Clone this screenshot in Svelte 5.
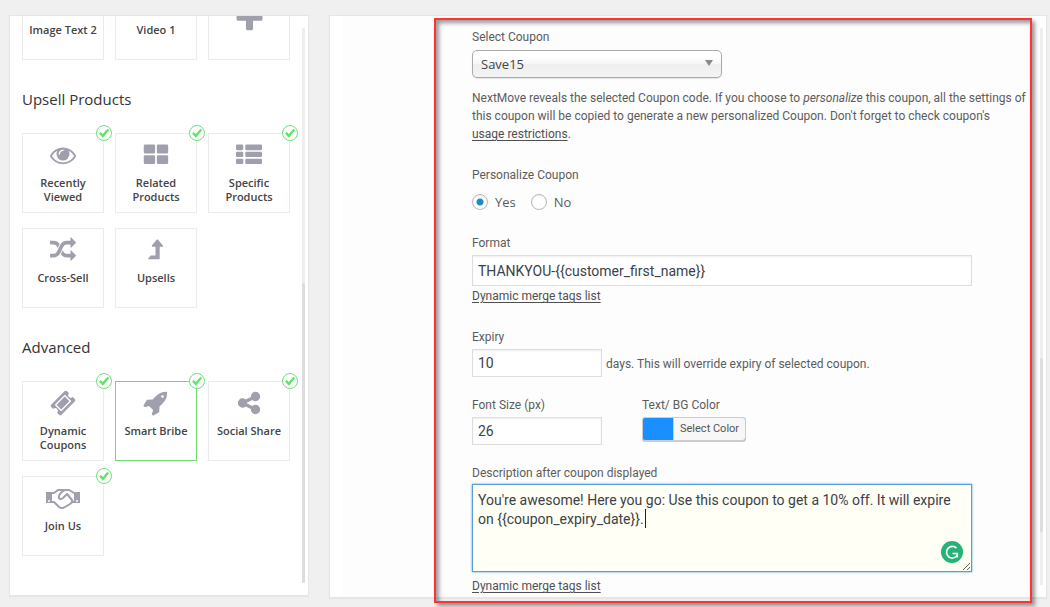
<script>
  const plus = 'M1600 736v192q0 40-28 68t-68 28h-416v416q0 40-28 68t-68 28h-192q-40 0-68-28t-28-68v-416h-416q-40 0-68-28t-28-68v-192q0-40 28-68t68-28h416v-416q0-40 28-68t68-28h192q40 0 68 28t28 68v416h416q40 0 68 28t28 68z';
  const eye = 'M1664 960q-152-236-381-353 61 104 61 225 0 185-131.5 316.5t-316.5 131.5-316.5-131.5-131.5-316.5q0-121 61-225-229 117-381 353 133 205 333.5 326.5t434.5 121.5 434.5-121.5 333.5-326.5zm-720-384q0-20-14-34t-34-14q-125 0-214.5 89.5t-89.5 214.5q0 20 14 34t34 14 34-14 14-34q0-86 61-147t147-61q20 0 34-14t14-34zm848 384q0 34-20 69-140 230-376.5 368.5t-499.5 138.5-499.5-139-376.5-368q-20-35-20-69t20-69q140-229 376.5-368t499.5-139 499.5 139 376.5 368q20 35 20 69z';
  const grid = 'M144 170h600q90 0 90 90v450q0 90-90 90h-600q-90 0-90-90v-450q0-90 90-90zm900 0h600q90 0 90 90v450q0 90-90 90h-600q-90 0-90-90v-450q0-90 90-90zm-900 740h600q90 0 90 90v430q0 90-90 90h-600q-90 0-90-90v-430q0-90 90-90zm900 0h600q90 0 90 90v430q0 90-90 90h-600q-90 0-90-90v-430q0-90 90-90z';
  const list = 'M80 170h340q80 0 80 80v240q0 80-80 80h-340q-80 0-80-80v-240q0-80 80-80zm640 0h992q80 0 80 80v240q0 80-80 80h-992q-80 0-80-80v-240q0-80 80-80zm-640 500h340q80 0 80 80v210q0 80-80 80h-340q-80 0-80-80v-210q0-80 80-80zm640 0h992q80 0 80 80v210q0 80-80 80h-992q-80 0-80-80v-210q0-80 80-80zm-640 480h340q80 0 80 80v210q0 80-80 80h-340q-80 0-80-80v-210q0-80 80-80zm640 0h992q80 0 80 80v210q0 80-80 80h-992q-80 0-80-80v-210q0-80 80-80z';
  const random = 'M666 481q-60 92-137 273-22-45-37-72.5t-40.5-63.5-51-56.5-63-35-81.5-14.5h-224q-14 0-23-9t-9-23v-192q0-14 9-23t23-9h224q250 0 410 225zm1126 799q0 14-9 23l-320 320q-9 9-23 9-13 0-22.5-9.5t-9.5-22.5v-192q-32 0-85 .5t-81 1-73-1-71-5-64-10.5-63-18.5-58-28.5-59-40-55-53.5-56-69.5q59-93 136-273 22 45 37 72.5t40.5 63.5 51 56.5 63 35 81.5 14.5h256v-192q0-14 9-23t23-9q12 0 24 10l319 319q9 9 9 23zm0-896q0 14-9 23l-320 320q-9 9-23 9-13 0-22.5-9.5t-9.5-22.5v-192h-256q-48 0-87 15t-69 45-51 61.5-45 77.5q-32 62-78 171-29 66-49.5 111t-54 105-64 100-74 83-90 68.5-106.5 42-128 16.5h-224q-14 0-23-9t-9-23v-192q0-14 9-23t23-9h224q48 0 87-15t69-45 51-61.5 45-77.5q32-62 78-171 29-66 49.5-111t54-105 64-100 74-83 90-68.5 106.5-42 128-16.5h256v-192q0-14 9-23t23-9q12 0 24 10l319 319q9 9 9 23z';
  const levelUp = 'M1400 630q-18 42-58 42h-192v832q0 32-32 32h-736q-20 0-29-18t4-35l160-192q10-11 25-11h320v-608h-192q-40 0-58-37t10-69l320-384q18-22 49-22t49 22l320 384q28 32 10 64z';
  const ticket = 'M1024 452l316 316-572 572-316-316zm-211 979l618-618q19-19 19-45t-19-45l-362-362q-18-18-45-18t-45 18l-618 618q-19 19-19 45t19 45l362 362q18 18 45 18t45-18zm889-637l-907 908q-37 37-90.5 37t-90.5-37l-126-126q56-56 56-136t-56-136-136-56-136 56l-125-126q-37-37-37-90.5t37-90.5l907-906q37-37 90.5-37t90.5 37l125 125q-56 56-56 136t56 136 136 56 136-56l126 125q37 37 37 90.5t-37 90.5z';
  const rocket = 'M1440 448q0-40-28-68t-68-28-68 28-28 68 28 68 68 28 68-28 28-68zm224-288q0 249-75.5 430.5t-253.5 360.5q-81 80-195 176l-20 379q-2 16-16 26l-384 224q-7 4-16 4-12 0-23-9l-64-64q-13-14-8-32l85-276-281-281-276 85q-3 1-9 1-14 0-23-9l-64-64q-17-19-5-39l224-384q10-14 26-16l379-20q96-114 176-195 188-187 358-258t431-71q14 0 24 9.5t10 22.5z';
  const share = 'M1344 1024q133 0 226.5 93.5t93.5 226.5-93.5 226.5-226.5 93.5-226.5-93.5-93.5-226.5q0-12 2-34l-360-180q-92 86-218 86-133 0-226.5-93.5t-93.5-226.5 93.5-226.5 226.5-93.5q126 0 218 86l360-180q-2-22-2-34 0-133 93.5-226.5t226.5-93.5 226.5 93.5 93.5 226.5-93.5 226.5-226.5 93.5q-126 0-218-86l-360 180q2 22 2 34t-2 34l360 180q92-86 218-86z';

  const groups = [
    {
      title: '',
      items: [
        { label: 'Image Text 2', icon: grid },
        { label: 'Video 1', icon: eye },
        { label: '', icon: plus, add: true }
      ]
    },
    {
      title: 'Upsell Products',
      items: [
        { label: 'Recently Viewed', icon: eye, checked: true },
        { label: 'Related Products', icon: grid, checked: true },
        { label: 'Specific Products', icon: list, checked: true },
        { label: 'Cross-Sell', icon: random },
        { label: 'Upsells', icon: levelUp }
      ]
    },
    {
      title: 'Advanced',
      items: [
        { label: 'Dynamic Coupons', icon: ticket, checked: true },
        { label: 'Smart Bribe', icon: rocket, checked: true },
        { label: 'Social Share', icon: share, checked: true },
        { label: 'Join Us', icon: 'handshake', checked: true }
      ]
    }
  ];

  let selected = $state('Smart Bribe');
  let coupon = $state('Save15');
  let personalize = $state('yes');
  let format = $state('THANKYOU-{{customer_first_name}}');
  let expiry = $state('10');
  let fontSize = $state('26');
  let description = $state("You're awesome! Here you go: Use this coupon to get a 10% off. It will expire on {{coupon_expiry_date}}. ");
</script>

<main>
  <aside class="panel components">
    <div class="groups">
      {#each groups as group}
        <section>
          {#if group.title}
            <h2>{group.title}</h2>
          {/if}
          <div class="cards">
            {#each group.items as item}
              <button
                class="card"
                class:active={item.label === selected}
                class:add={item.add}
                aria-label={item.label || 'Add component'}
                onclick={() => (selected = item.label)}
              >
                {#if item.icon === 'handshake'}
                  <svg class="icon wide" viewBox="0 0 34 26">
                    <path d="M0 7h6v11h-6zM28 7h6v11h-6z" fill="currentColor" />
                    <circle cx="3" cy="16" r="1" fill="#fff" />
                    <circle cx="31" cy="16" r="1" fill="#fff" />
                    <path
                      d="M6 8h2l4-3h4l2 1M6 17h2l5 5q3 2 6 0l5-3q3-2 2-4l-5-6-4 4q-3 2-4 0-1-3 4-7 1-1 3-1h3l5 3h2M25 17h3"
                      fill="none"
                      stroke="currentColor"
                      stroke-width="2"
                      stroke-linejoin="round"
                    />
                  </svg>
                {:else}
                  <svg class="icon" viewBox="0 0 1792 1792"><path d={item.icon} fill="currentColor" /></svg>
                {/if}
                {#if item.label}
                  <span>{item.label}</span>
                {/if}
                {#if item.checked}
                  <svg class="tick" viewBox="0 0 16 16">
                    <circle cx="8" cy="8" r="7.5" fill="#fff" stroke="#6fe07a" />
                    <path d="M3 8.600l1.800-1.600 2 2 4.700-5.200 1.600 1.400-6.200 7.600z" fill="#5fe36c" />
                  </svg>
                {/if}
              </button>
            {/each}
          </div>
        </section>
      {/each}
    </div>
    <div class="track"><div class="thumb"></div></div>
  </aside>

  <div class="panel settings">
    <form>
      <div class="field">
        <label for="coupon">Select Coupon</label>
        <div class="select">
          <select id="coupon" bind:value={coupon}>
            <option>Save15</option>
          </select>
        </div>
        <p>
          NextMove reveals the selected Coupon code. If you choose to <em>personalize</em> this coupon, all the settings of
          this coupon will be copied to generate a new personalized Coupon. Don't forget to check coupon's
          <a href="#restrictions">usage restrictions</a>.
        </p>
      </div>

      <fieldset class="field">
        <legend>Personalize Coupon</legend>
        <div class="radios">
          <label><input type="radio" value="yes" bind:group={personalize} />Yes</label>
          <label><input type="radio" value="no" bind:group={personalize} />No</label>
        </div>
      </fieldset>

      <div class="field">
        <label for="format">Format</label>
        <input id="format" class="wide-input" type="text" bind:value={format} />
        <a href="#tags">Dynamic merge tags list</a>
      </div>

      <div class="field tight">
        <label for="expiry">Expiry</label>
        <div class="inline">
          <input id="expiry" type="text" bind:value={expiry} />
          <span>days. This will override expiry of selected coupon.</span>
        </div>
      </div>

      <div class="field tight columns">
        <div>
          <label for="size">Font Size (px)</label>
          <input id="size" type="text" bind:value={fontSize} />
        </div>
        <div>
          <label for="color">Text/ BG Color</label>
          <button id="color" class="color" type="button"><span>Select Color</span></button>
        </div>
      </div>

      <div class="field">
        <label for="description">Description after coupon displayed</label>
        <div class="editor">
          <textarea id="description" bind:value={description}></textarea>
          <div class="caret"></div>
          <svg class="grammar" viewBox="0 0 22 22">
            <circle cx="11" cy="11" r="11" fill="#26b277" />
            <path d="M15.500 7.200a5.800 5.800 0 1 0 .6 7.400M11.500 12.500h4.800v4" fill="none" stroke="#fff" stroke-width="1.700" />
          </svg>
        </div>
        <a href="#tags">Dynamic merge tags list</a>
      </div>
    </form>
    <div class="track"><div class="thumb"></div></div>
    <div class="highlight"></div>
  </div>
</main>

<style>
  :global(body) {
    background: #f0f0f0;
  }
  main {
    display: grid;
    grid-template-columns: 300px 1fr;
    gap: 20px;
    height: 100vh;
    padding: 15px 3px 9px 9px;
    box-sizing: border-box;
    overflow: hidden;
    color: #444;
    font: 12px/18px Roboto, 'Open Sans', sans-serif;
  }
  .panel {
    display: flex;
    justify-content: space-between;
    position: relative;
    min-height: 0;
    box-sizing: border-box;
    background: #fff;
    border: 1px solid #e5e5e5;
    box-shadow: 0 1px 1px rgba(0, 0, 0, 0.04);
  }
  .components {
    margin-bottom: 2px;
    padding: 0 3px 12px 12px;
    overflow: hidden;
    font-family: 'Open Sans', 'Noto Sans', sans-serif;
  }
  .groups {
    display: flex;
    flex-direction: column;
    justify-content: flex-end;
    gap: 30px;
    padding-bottom: 27px;
  }
  h2 {
    margin: 0 0 24px;
    font-size: 15px;
    font-weight: 400;
    line-height: 19px;
    color: #333;
  }
  .cards {
    display: grid;
    grid-template-columns: repeat(3, 82px);
    gap: 15px 11px;
  }
  .card {
    display: flex;
    flex-direction: column;
    align-items: center;
    position: relative;
    height: 80px;
    padding: 8px 5px 0;
    box-sizing: border-box;
    background: #fff;
    border: 1px solid #ebebeb;
    color: #444;
    font: 600 11px/14px 'Open Sans', 'Noto Sans', sans-serif;
  }
  .card.active {
    border-color: #6fdc6f;
  }
  .card.add {
    justify-content: center;
    padding: 0 0 4px;
  }
  .icon {
    flex: none;
    width: 26px;
    height: 26px;
    margin-bottom: 8px;
    color: #a09fad;
  }
  .icon.wide {
    width: 34px;
  }
  .add .icon {
    width: 33px;
    height: 33px;
    margin: 0;
  }
  .tick {
    position: absolute;
    top: -9px;
    right: -9px;
    width: 16px;
    height: 16px;
  }
  .track {
    flex: none;
    display: flex;
    flex-direction: column;
    justify-content: flex-end;
    width: 3px;
    margin-top: 12px;
    background: #eee;
  }
  .thumb {
    height: 54%;
    background: #ddd;
    border-radius: 2px;
  }
  .settings {
    padding: 0 3px 12px 12px;
  }
  .settings .track {
    box-sizing: border-box;
    padding-bottom: 53px;
  }
  .settings .thumb {
    height: 174px;
  }
  form {
    flex: 1;
    margin: 0 10px -12px 0;
    padding: 12px 0 0 130px;
    background: #fdfdfd;
  }
  .field {
    margin: 0 0 23px;
    padding: 0;
    border: 0;
  }
  .field.tight {
    margin-bottom: 19px;
  }
  .field label,
  legend {
    display: block;
    padding: 0;
    color: #5c5c5c;
  }
  .select {
    position: relative;
    width: 250px;
    margin: 4px 0 11px;
  }
  .select::after {
    content: '';
    position: absolute;
    top: 10px;
    right: 9px;
    border: 4px solid transparent;
    border-top: 6px solid #888;
    border-bottom: 0;
  }
  select {
    display: block;
    appearance: none;
    width: 100%;
    height: 28px;
    padding: 0 8px;
    border: 1px solid #aaa;
    border-radius: 5px;
    background: linear-gradient(#fff 20%, #f6f6f6 50%, #eee 52%, #f4f4f4);
    box-shadow: 0 1px 1px rgba(0, 0, 0, 0.1);
    color: #444;
    font: 13px/26px 'Open Sans', 'Noto Sans', sans-serif;
  }
  p {
    margin: 0;
    color: #5c5c5c;
  }
  a {
    color: #505050;
    text-underline-offset: 2px;
    white-space: nowrap;
  }
  .radios {
    display: flex;
    gap: 15px;
    margin-top: 9px;
  }
  .radios label {
    display: flex;
    align-items: center;
    gap: 7px;
    font-family: 'Open Sans', 'Noto Sans', sans-serif;
    font-size: 13px;
  }
  input[type='radio'] {
    appearance: none;
    width: 16px;
    height: 16px;
    margin: 0;
    border: 1px solid #b4b9be;
    border-radius: 50%;
    background: #fff;
    box-shadow: inset 0 1px 2px rgba(0, 0, 0, 0.07);
  }
  input[type='radio']:checked {
    background: radial-gradient(circle, #1e8cbe 3px, #fff 4px);
  }
  input[type='text'],
  textarea {
    display: block;
    width: 130px;
    height: 28px;
    margin: 0;
    padding: 0 5px;
    box-sizing: border-box;
    border: 1px solid #ddd;
    background: #fff;
    box-shadow: inset 0 1px 2px rgba(0, 0, 0, 0.07);
    color: #3c4147;
    font: 14px/19px Roboto, 'Open Sans', sans-serif;
  }
  input[type='text'] {
    margin-top: 3px;
  }
  input.wide-input {
    width: 500px;
    height: 31px;
    margin-bottom: 1px;
  }
  .inline {
    display: flex;
    align-items: center;
    gap: 4px;
    color: #5c5c5c;
  }
  .inline span {
    margin-top: 4px;
  }
  .columns {
    display: flex;
    gap: 40px;
  }
  .color {
    display: flex;
    height: 24px;
    margin-top: 3px;
    padding: 0 0 0 30px;
    border: 1px solid #ccc;
    border-radius: 3px;
    background: #1890ff;
    box-shadow: 0 1px 0 #ccc;
    overflow: hidden;
  }
  .color span {
    padding: 0 6px;
    border-left: 1px solid #ccc;
    background: #f7f7f7;
    color: #555;
    font: 11px/22px Roboto, 'Open Sans', sans-serif;
  }
  .editor {
    position: relative;
    width: 500px;
    margin: 2px 0 5px;
  }
  textarea {
    width: 100%;
    height: 88px;
    padding: 6px 5px;
    border-color: #5b9dd9;
    background: #fffff5;
    box-shadow: 0 0 2px rgba(30, 140, 190, 0.8);
  }
  .caret {
    position: absolute;
    top: 25px;
    left: 173px;
    width: 1px;
    height: 19px;
    background: #222;
  }
  .grammar {
    position: absolute;
    right: 9px;
    bottom: 9px;
    width: 22px;
    height: 22px;
  }
  .highlight {
    position: absolute;
    inset: 2px 14px -6px 104px;
    border: 2px solid #ff3333;
    box-shadow:
      3px 3px 4px rgba(0, 0, 0, 0.4),
      inset 3px 3px 4px rgba(0, 0, 0, 0.4);
    pointer-events: none;
  }
</style>
